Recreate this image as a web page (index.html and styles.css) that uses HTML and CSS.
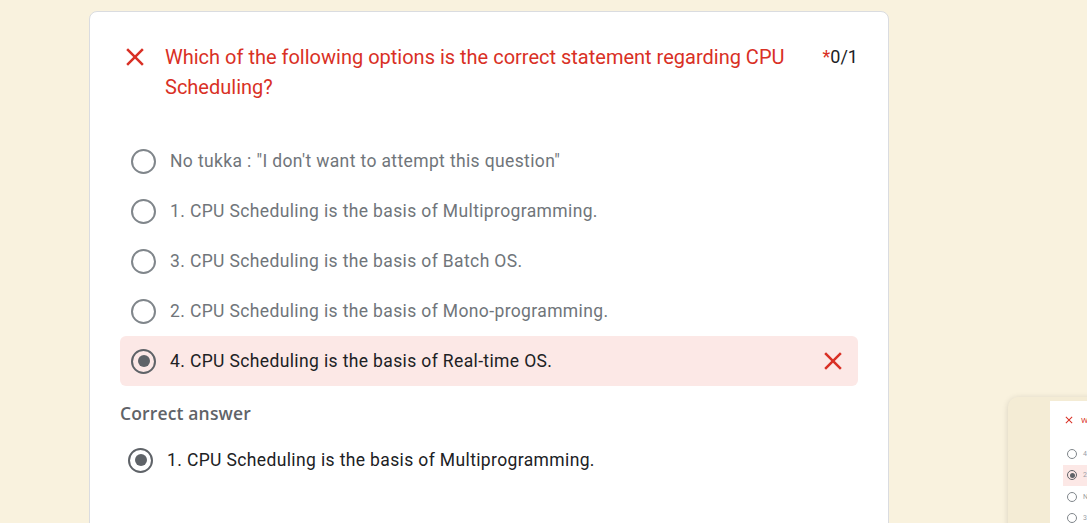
FILE: index.html
```html
<!DOCTYPE html>
<html lang="en">
<head>
<meta charset="utf-8">
<title>Quiz result</title>
<link rel="stylesheet" href="styles.css">
</head>
<body>
<div class="card">
  <div class="q-head">
    <svg class="x-icon" viewBox="0 0 24 24" aria-hidden="true"><path d="M19 6.41L17.59 5 12 10.59 6.41 5 5 6.41 10.59 12 5 17.59 6.41 19 12 13.41 17.59 19 19 17.59 13.41 12z"/></svg>
    <div class="q-title">Which of the following options is the correct statement regarding CPU Scheduling?</div>
    <div class="q-score"><span class="req">*</span>0/1</div>
  </div>
  <div class="options">
    <div class="opt"><span class="radio"></span><span class="opt-text">No tukka : "I don't want to attempt this question"</span></div>
    <div class="opt"><span class="radio"></span><span class="opt-text">1. CPU Scheduling is the basis of Multiprogramming.</span></div>
    <div class="opt"><span class="radio"></span><span class="opt-text">3. CPU Scheduling is the basis of Batch OS.</span></div>
    <div class="opt"><span class="radio"></span><span class="opt-text">2. CPU Scheduling is the basis of Mono-programming.</span></div>
    <div class="opt opt-wrong"><span class="radio radio-on"></span><span class="opt-text">4. CPU Scheduling is the basis of Real-time OS.</span>
      <svg class="x-icon x-right" viewBox="0 0 24 24" aria-hidden="true"><path d="M19 6.41L17.59 5 12 10.59 6.41 5 5 6.41 10.59 12 5 17.59 6.41 19 12 13.41 17.59 19 19 17.59 13.41 12z"/></svg>
    </div>
  </div>
  <div class="correct-label">Correct answer</div>
  <div class="opt opt-correct"><span class="radio radio-on"></span><span class="opt-text">1. CPU Scheduling is the basis of Multiprogramming.</span></div>
</div>

<div class="mini">
  <div class="mini-card">
    <div class="mini-head"><svg class="mini-x" viewBox="0 0 24 24" aria-hidden="true"><path d="M19 6.41L17.59 5 12 10.59 6.41 5 5 6.41 10.59 12 5 17.59 6.41 19 12 13.41 17.59 19 19 17.59 13.41 12z"/></svg><span class="mini-title">W</span></div>
    <div class="mini-opts">
      <div class="mini-opt"><span class="mini-radio"></span><span class="mini-text">4</span></div>
      <div class="mini-opt mini-wrong"><span class="mini-radio mini-on"></span><span class="mini-text">2</span></div>
      <div class="mini-opt"><span class="mini-radio"></span><span class="mini-text">N</span></div>
      <div class="mini-opt"><span class="mini-radio"></span><span class="mini-text">3</span></div>
    </div>
  </div>
</div>
</body>
</html>
```

FILE: styles.css
```css
html, body {
  margin: 0;
  padding: 0;
}
body {
  background: #f9f2de;
  font-family: Roboto, "Liberation Sans", Arial, sans-serif;
  overflow: hidden;
  height: 523px;
}
.card {
  box-sizing: border-box;
  margin: 11px 0 0 89px;
  width: 800px;
  height: 560px;
  background: #ffffff;
  border: 1px solid #dadce0;
  border-radius: 8px;
  padding: 30px 30px 0 30px;
}
.q-head {
  display: flex;
  align-items: flex-start;
}
.x-icon {
  width: 30px;
  height: 30px;
  fill: #d93025;
  flex: none;
}
.q-head .x-icon {
  margin-right: 15px;
}
.q-title {
  flex: 1;
  font-size: 20px;
  line-height: 30px;
  color: #d93025;
  padding-right: 20px;
}
.q-score {
  font-size: 18px;
  line-height: 30px;
  color: #202124;
  white-space: nowrap;
}
.req {
  color: #d93025;
}
.options {
  margin-top: 34px;
}
.opt {
  display: flex;
  align-items: center;
  height: 50px;
  padding-left: 11px;
  border-radius: 6px;
}
.radio {
  box-sizing: border-box;
  width: 25px;
  height: 25px;
  border: 2px solid #80868b;
  border-radius: 50%;
  flex: none;
  display: flex;
  align-items: center;
  justify-content: center;
  margin-right: 14px;
}
.radio-on {
  border-color: #5f6368;
}
.radio-on::after {
  content: "";
  width: 12px;
  height: 12px;
  border-radius: 50%;
  background: #5f6368;
}
.opt-text {
  font-size: 17.5px;
  letter-spacing: 0.37px;
  color: #70757a;
  flex: 1;
}
.opt-wrong {
  background: #fce8e6;
  padding-right: 10px;
}
.opt-wrong .opt-text,
.opt-correct .opt-text {
  color: #202124;
}
.correct-label {
  margin-top: 15px;
  font-family: "Open Sans", Roboto, sans-serif;
  font-weight: 600;
  font-size: 17.5px;
  letter-spacing: 0.15px;
  line-height: 24px;
  color: #5f6368;
}
.opt-correct {
  margin-top: 10px;
  padding-left: 8px;
}

/* small floating preview at bottom right */
.mini {
  position: fixed;
  left: 1008px;
  top: 397px;
  width: 120px;
  height: 160px;
  background: #f4ecd5;
  border-radius: 10px;
  box-shadow: 0 1px 6px rgba(0,0,0,0.14);
  padding: 4px 0 0 42px;
}
.mini-card {
  background: #ffffff;
  height: 200px;
  padding: 12px 0 0 13px;
}
.mini-head {
  display: flex;
  align-items: center;
  height: 14px;
}
.mini-x {
  width: 12px;
  height: 12px;
  fill: #d93025;
  margin-right: 6px;
}
.mini-title {
  font-size: 8px;
  color: #d93025;
}
.mini-opts {
  margin-top: 16px;
}
.mini-opt {
  display: flex;
  align-items: center;
  height: 21.5px;
  padding-left: 4px;
}
.mini-wrong {
  background: #fce8e6;
}
.mini-radio {
  box-sizing: border-box;
  width: 10px;
  height: 10px;
  border: 1px solid #80868b;
  border-radius: 50%;
  display: flex;
  align-items: center;
  justify-content: center;
  margin-right: 6px;
}
.mini-on {
  border-color: #5f6368;
}
.mini-on::after {
  content: "";
  width: 5px;
  height: 5px;
  border-radius: 50%;
  background: #5f6368;
}
.mini-text {
  font-size: 7px;
  color: #9aa0a6;
}
```
